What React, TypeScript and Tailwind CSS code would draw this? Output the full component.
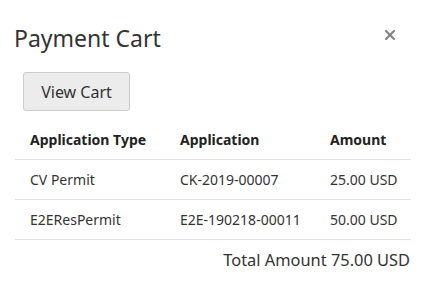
import { X } from "lucide-react";

export default function App() {
  const rows = [
    { type: "CV Permit", app: "CK-2019-00007", amount: "25.00 USD" },
    { type: "E2EResPermit", app: "E2E-190218-00011", amount: "50.00 USD" },
  ];

  return (
    <div
      className="w-[427px] h-[287px] bg-white text-[#333333] overflow-hidden"
      style={{ fontFamily: '"Noto Sans", "Open Sans", sans-serif' }}
    >
      {/* Header */}
      <div className="flex items-start justify-between pl-[14px] pr-[29px] pt-[22px]">
        <h1 className="text-[23px] leading-[32px]">Payment Cart</h1>
        <button className="mt-[5px] text-[#858585]">
          <X className="w-[16px] h-[16px]" strokeWidth={3.4} />
        </button>
      </div>

      {/* View cart */}
      <div className="pl-[23px] pt-[18px]">
        <button className="w-[107px] h-[39px] rounded-[3px] border border-[#cccccc] bg-[#ececec] text-[16px]">
          View Cart
        </button>
      </div>

      {/* Table */}
      <div className="mx-[15px] mt-[9px] w-[396px]">
        <div className="grid grid-cols-[150px_150px_1fr] h-[40px] items-center border-b border-[#e0e0e0] px-[15px] text-[14px] font-bold text-[#222222] whitespace-nowrap">
          <span>Application Type</span>
          <span>Application</span>
          <span>Amount</span>
        </div>
        {rows.map((r) => (
          <div
            key={r.app}
            className="grid grid-cols-[150px_150px_1fr] h-[40px] items-center border-b border-[#e0e0e0] px-[15px] text-[14px] whitespace-nowrap"
          >
            <span>{r.type}</span>
            <span>{r.app}</span>
            <span>{r.amount}</span>
          </div>
        ))}
        <div className="flex justify-end pt-[8px] pr-[1px] text-[16.4px] whitespace-nowrap">
          Total Amount 75.00 USD
        </div>
      </div>
    </div>
  );
}
